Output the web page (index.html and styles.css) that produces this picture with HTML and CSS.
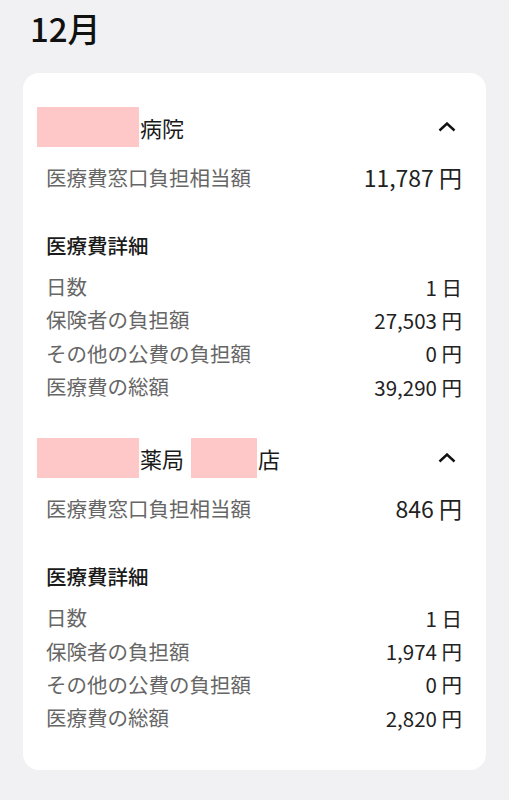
FILE: index.html
```html
<!DOCTYPE html>
<html lang="ja">
<head>
<meta charset="utf-8">
<link rel="stylesheet" href="styles.css">
</head>
<body>
<h1 class="month">12月</h1>
<div class="card">
  <section class="facility">
    <div class="fac-head">
      <div class="fac-name"><span class="mask mask-lg"></span>病院</div>
      <svg class="chev" width="18" height="10" viewBox="0 0 18 10"><path d="M1.5 8.5 L9 1.5 L16.5 8.5" fill="none" stroke="#111" stroke-width="2.4"/></svg>
    </div>
    <div class="amount-row"><span class="label">医療費窓口負担相当額</span><span class="amount">11,787 円</span></div>
    <h2 class="detail-title">医療費詳細</h2>
    <div class="rows">
      <div class="row"><span class="label">日数</span><span class="val">1 日</span></div>
      <div class="row"><span class="label">保険者の負担額</span><span class="val">27,503 円</span></div>
      <div class="row"><span class="label">その他の公費の負担額</span><span class="val">0 円</span></div>
      <div class="row"><span class="label">医療費の総額</span><span class="val">39,290 円</span></div>
    </div>
  </section>
  <section class="facility">
    <div class="fac-head">
      <div class="fac-name"><span class="mask mask-lg"></span>薬局<span class="mask mask-sm"></span>店</div>
      <svg class="chev" width="18" height="10" viewBox="0 0 18 10"><path d="M1.5 8.5 L9 1.5 L16.5 8.5" fill="none" stroke="#111" stroke-width="2.4"/></svg>
    </div>
    <div class="amount-row"><span class="label">医療費窓口負担相当額</span><span class="amount">846 円</span></div>
    <h2 class="detail-title">医療費詳細</h2>
    <div class="rows">
      <div class="row"><span class="label">日数</span><span class="val">1 日</span></div>
      <div class="row"><span class="label">保険者の負担額</span><span class="val">1,974 円</span></div>
      <div class="row"><span class="label">その他の公費の負担額</span><span class="val">0 円</span></div>
      <div class="row"><span class="label">医療費の総額</span><span class="val">2,820 円</span></div>
    </div>
  </section>
</div>
</body>
</html>
```
FILE: styles.css
```css
* { box-sizing: border-box; }
html, body { margin: 0; padding: 0; }
body {
  background: #f1f1f3;
  font-family: "Noto Sans CJK JP", "Noto Sans", sans-serif;
  color: #222;
  width: 509px;
  height: 800px;
  overflow: hidden;
}
.month {
  margin: 0;
  padding: 6px 0 0 30px;
  font-size: 33px;
  font-weight: 500;
  line-height: 44px;
  color: #111;
  height: 73px;
}
.card {
  margin: 0 23px 0 23px;
  background: #fff;
  border-radius: 16px;
  padding: 34px 24px 36px 14px;
  display: flex;
  flex-direction: column;
  gap: 35px;
}
.facility { display: flex; flex-direction: column; }
.fac-head {
  display: flex;
  align-items: center;
  justify-content: space-between;
  height: 40px;
}
.fac-name {
  display: flex;
  align-items: center;
  font-size: 22px;
  line-height: 40px;
  color: #1a1a1a;
}
.mask { display: inline-block; height: 40px; background: #ffc8c8; }
.mask-lg { width: 102px; margin-right: 1px; }
.mask-sm { width: 66px; margin: 0 1px 0 7px; }
.chev { margin-right: 6px; }
.amount-row {
  display: flex;
  justify-content: space-between;
  align-items: center;
  padding-left: 9px;
  margin-top: 10px;
  height: 40px;
}
.label { font-size: 20.5px; color: #666; }
.amount { font-size: 23px; color: #222; }
.detail-title {
  margin: 31px 0 0 9px;
  font-size: 20.5px;
  font-weight: 500;
  line-height: 34px;
  color: #1a1a1a;
}
.rows { margin-top: 8px; padding-left: 9px; display: flex; flex-direction: column; }
.row {
  display: flex;
  justify-content: space-between;
  align-items: center;
  height: 33.3px;
}
.row .label { line-height: 33px; }
.val { font-size: 20.5px; color: #222; }
```
